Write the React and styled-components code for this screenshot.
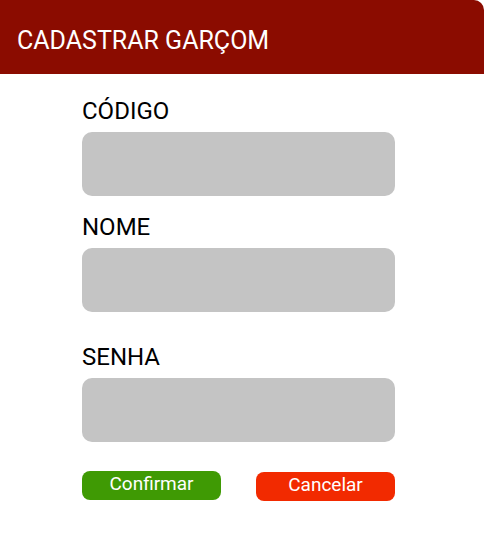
import React from 'react';
import styled, { createGlobalStyle } from 'styled-components';

const GlobalStyle = createGlobalStyle`
  body {
    margin: 0;
    background: #ffffff;
    font-family: Roboto, "Liberation Sans", sans-serif;
  }
`;

const Page = styled.div`
  width: 484px;
  height: 538px;
  background: #ffffff;
`;

const Header = styled.header`
  height: 74px;
  box-sizing: border-box;
  background: #8b0c00;
  border-top-right-radius: 10px;
  padding: 27px 0 0 17px;
`;

const Title = styled.h1`
  margin: 0;
  font-size: 25px;
  font-weight: 400;
  color: #ffffff;
  line-height: 28px;
`;

const Form = styled.form`
  width: 313px;
  margin: 0 0 0 82px;
  padding-top: 25px;
  display: flex;
  flex-direction: column;
`;

const Field = styled.div`
  display: flex;
  flex-direction: column;
  margin-top: ${(p) => p.$gap || 0}px;
`;

const Label = styled.label`
  font-size: 24px;
  line-height: 24px;
  color: #000000;
  margin-bottom: 9px;
`;

const Input = styled.input`
  height: 64px;
  border: none;
  border-radius: 10px;
  background: #c4c4c4;
  outline: none;
  padding: 0 12px;
  font-family: inherit;
  font-size: 18px;
`;

const Actions = styled.div`
  display: flex;
  justify-content: space-between;
  margin-top: 29px;
`;

const Button = styled.button`
  width: 139px;
  height: 29px;
  border: none;
  border-radius: 8px;
  background: ${(p) => p.$color};
  color: #ffffff;
  font-family: inherit;
  font-size: 19px;
  line-height: 26px;
  padding: 0 0 3px;
  margin-top: ${(p) => p.$offset || 0}px;
`;

export default function App() {
  return (
    <Page>
      <GlobalStyle />
      <Header>
        <Title>CADASTRAR GARÇOM</Title>
      </Header>
      <Form onSubmit={(e) => e.preventDefault()}>
        <Field>
          <Label>CÓDIGO</Label>
          <Input type="text" />
        </Field>
        <Field $gap={19}>
          <Label>NOME</Label>
          <Input type="text" />
        </Field>
        <Field $gap={33}>
          <Label>SENHA</Label>
          <Input type="password" />
        </Field>
        <Actions>
          <Button type="submit" $color="#3f9a04">Confirmar</Button>
          <Button type="button" $color="#f22a00" $offset={1}>Cancelar</Button>
        </Actions>
      </Form>
    </Page>
  );
}
